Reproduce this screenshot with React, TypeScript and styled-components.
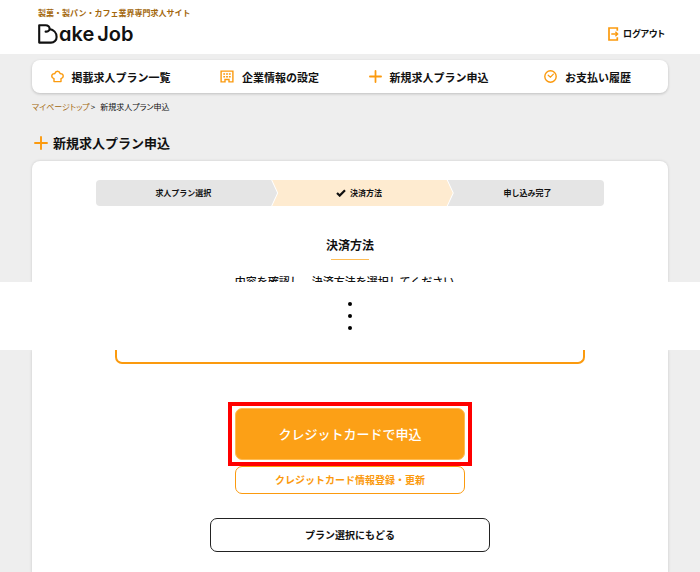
import React from "react";
import styled, { createGlobalStyle, css } from "styled-components";

const colors = {
  ink: "#111111",
  orange: "#fb9a0e",
  brown: "#a3670c",
  page: "#eeeeee",
  line: "#ffbd55",
};

const GlobalStyle = createGlobalStyle`
  *, *::before, *::after { box-sizing: border-box; }
  body {
    margin: 0;
    background: ${colors.page};
    color: ${colors.ink};
    font-family: "Noto Sans CJK JP", "Noto Sans", sans-serif;
    font-size: 11px;
    line-height: 16px;
  }
  a { color: inherit; text-decoration: none; }
  h1, h2, p, ol, ul { margin: 0; padding: 0; }
  ol, ul { list-style: none; }
`;

const Page = styled.div`
  display: flex;
  flex-direction: column;
  min-height: 100vh;
`;

const Header = styled.header`
  display: flex;
  align-items: flex-end;
  justify-content: space-between;
  padding: 7px 35px 9px 38px;
  background: #ffffff;
`;

const Brand = styled.div`
  display: flex;
  flex-direction: column;
  gap: 4px;
`;

const Tagline = styled.p`
  color: ${colors.brown};
  font-size: 8px;
  line-height: 12px;
  font-weight: 700;
`;

const Logo = styled.a`
  display: flex;
  align-items: center;
  gap: 1px;
  height: 22px;
`;

const LogoText = styled.span`
  display: flex;
  gap: 3px;
  font-family: Inter, "Open Sans", sans-serif;
  font-feature-settings: "cv11", "ss03";
  font-size: 20px;
  line-height: 22px;
  font-weight: 600;
`;

const Logout = styled.a`
  display: flex;
  align-items: center;
  gap: 4px;
  padding-bottom: 3px;
  font-size: 9px;
  font-weight: 700;
  font-feature-settings: "palt";
`;

const Nav = styled.nav`
  margin: 6px 32px 0;
  background: #ffffff;
  border-radius: 8px;
  box-shadow: 0 1px 3px rgba(0, 0, 0, 0.2);
`;

const NavList = styled.ul`
  display: grid;
  grid-template-columns: repeat(4, 1fr);
`;

const NavLink = styled.a`
  display: flex;
  align-items: center;
  justify-content: center;
  gap: 8px;
  height: 33px;
  padding-right: 2px;
  font-weight: 700;
  white-space: nowrap;
`;

const Breadcrumb = styled.nav`
  display: flex;
  gap: 5px;
  margin: 6px 32px 0;
  font-size: 8px;
  font-feature-settings: "palt";
`;

const CrumbLink = styled.a`
  color: ${colors.brown};
  margin-right: -4px;
`;

const TitleRow = styled.div`
  display: flex;
  align-items: center;
  gap: 5px;
  margin: 18px 34px 8px;
`;

const Title = styled.h1`
  font-size: 13px;
  line-height: 20px;
  font-weight: 700;
`;

const Panel = styled.section<{ $part: "top" | "bottom" }>`
  display: flex;
  flex-direction: column;
  align-items: center;
  margin: 0 32px;
  background: #ffffff;
  box-shadow: 0 0 3px rgba(0, 0, 0, 0.15);
  ${(p) =>
    p.$part === "top"
      ? css`
          height: 121px;
          overflow: hidden;
          padding-top: 19px;
          border-radius: 8px 8px 0 0;
        `
      : css`
          flex: 1;
          padding-bottom: 21px;
        `}
`;

const Steps = styled.ol`
  display: grid;
  grid-template-columns: 176fr 176fr 158fr;
  flex-shrink: 0;
  width: 80%;
  border-radius: 4px;
  overflow: hidden;
`;

const stepShape = {
  first: "polygon(0 0, calc(100% - 6px) 0, 100% 50%, calc(100% - 6px) 100%, 0 100%)",
  middle: "polygon(1px 0, calc(100% - 6px) 0, 100% 50%, calc(100% - 6px) 100%, 1px 100%, 7px 50%)",
  last: "polygon(1px 0, 100% 0, 100% 100%, 1px 100%, 7px 50%)",
};

const Step = styled.li<{ $shape: keyof typeof stepShape; $current?: boolean }>`
  display: flex;
  align-items: center;
  justify-content: center;
  gap: 4px;
  height: 26px;
  margin-right: ${(p) => (p.$shape === "last" ? "0" : "-6px")};
  padding-right: ${(p) => (p.$shape === "last" ? "0" : "6px")};
  padding-left: ${(p) => (p.$shape === "last" ? "4px" : "0")};
  background: ${(p) => (p.$current ? "#feebd0" : "#e5e5e5")};
  clip-path: ${(p) => stepShape[p.$shape]};
  font-size: 8px;
  font-weight: 700;
`;

const SectionTitle = styled.h2`
  margin-top: 29px;
  font-size: 12px;
  line-height: 20px;
  font-weight: 700;
`;

const TitleRule = styled.div`
  flex-shrink: 0;
  width: 38px;
  height: 1px;
  margin-top: 4px;
  background: ${colors.line};
`;

const Lead = styled.p`
  margin-top: 13px;
  font-weight: 500;
  white-space: nowrap;
`;

const Omitted = styled.div`
  position: relative;
  display: flex;
  flex-direction: column;
  align-items: center;
  justify-content: center;
  gap: 8px;
  height: 68px;
  background: #ffffff;
`;

const Dot = styled.span`
  width: 4px;
  height: 4px;
  border-radius: 50%;
  background: #000000;
`;

const FrameEnd = styled.div`
  width: 74%;
  height: 14px;
  border: 2px solid ${colors.orange};
  border-top: 0;
  border-radius: 0 0 7px 7px;
`;

const Highlight = styled.div`
  margin-top: 38px;
  padding: 2px 3px;
  border: 4px solid #ff0000;
`;

const Button = styled.button<{ $kind: "primary" | "outline" | "back" }>`
  display: block;
  border-radius: 7px;
  font-family: inherit;
  line-height: 20px;
  cursor: pointer;
  ${(p) =>
    p.$kind === "primary" &&
    css`
      width: 230px;
      padding: 15px 0;
      border: 1px solid ${colors.line};
      background: #fca016;
      color: #ffffff;
      font-size: 13px;
      font-weight: 500;
    `}
  ${(p) =>
    p.$kind === "outline" &&
    css`
      width: 230px;
      padding: 3px 0;
      border: 1px solid ${colors.orange};
      background: #ffffff;
      color: ${colors.orange};
      font-size: 10px;
      font-weight: 700;
    `}
  ${(p) =>
    p.$kind === "back" &&
    css`
      width: 280px;
      margin-top: 24px;
      padding: 6px 0;
      border: 1px solid #222222;
      background: #ffffff;
      color: ${colors.ink};
      font-size: 10px;
      font-weight: 700;
    `}
`;

const Icon = styled.svg`
  flex-shrink: 0;
  fill: none;
  stroke: ${colors.orange};
`;

const HatIcon = () => (
  <Icon width="13" height="13" viewBox="0 0 13 13" strokeWidth="1.4" strokeLinejoin="round" aria-hidden="true">
    <path d="M3 11.6V8.6C1.400 8.200.7 7 .8 5.800.9 4.400 2.200 3.500 3.700 3.700 4.200 2.200 5.100 1.200 6.500 1.200s2.300 1 2.800 2.500c1.500-.2 2.800.7 2.900 2.100.1 1.200-.6 2.400-2.200 2.800v3z" />
  </Icon>
);

const BuildingIcon = () => (
  <Icon width="14" height="13" viewBox="0 0 14 13" strokeWidth="1.4" aria-hidden="true">
    <path d="M1.100 1.100h11.800v10.800H9V9.500H5v2.400H1.100z" />
    <path d="M3.300 4h1.800M6.100 4h1.800M8.900 4h1.800M3.300 6.700h1.800M6.100 6.700h1.800M8.900 6.700h1.800" strokeWidth="1.5" />
  </Icon>
);

const PlusIcon = ({ size }: { size: number }) => (
  <Icon width={size} height={size} viewBox="0 0 14 14" strokeWidth="1.9" strokeLinecap="round" aria-hidden="true">
    <path d="M7 1v12M1 7h12" />
  </Icon>
);

const ClockIcon = () => (
  <Icon width="13" height="13" viewBox="0 0 13 13" strokeWidth="1.4" strokeLinecap="round" aria-hidden="true">
    <circle cx="6.5" cy="6.5" r="5.7" />
    <path d="M4.200 5.200l2.200 2 3-3" strokeWidth="1.2" />
  </Icon>
);

const LogoutIcon = () => (
  <Icon width="11" height="14" viewBox="0 0 11 14" strokeWidth="1.3" aria-hidden="true">
    <path d="M9.300 3.700V1H1v12h8.300v-2.700" strokeWidth="1.7" />
    <path d="M3.300 7h6.200M7.400 4.700L9.700 7 7.400 9.300" />
  </Icon>
);

const CheckIcon = () => (
  <Icon width="10" height="8" viewBox="0 0 10 8" aria-hidden="true">
    <path d="M1 4l2.700 2.600L9 1.200" stroke={colors.ink} strokeWidth="2.2" />
  </Icon>
);

const LogoMark = () => (
  <svg width="20" height="20" viewBox="0 0 20 20" fill="none" stroke="#111111" strokeWidth="2.1" strokeLinejoin="round" strokeLinecap="round" aria-hidden="true">
    <path d="M7.600 7.600C9.300 7.900 11.400 7 11.600 5 11.700 2.800 10 1.200 7.600 1.200H1.200v17.400H13a5.600 5.600 0 0 0 5.600-5.700C18.600 8.800 15.600 5.800 11.600 5" />
  </svg>
);

const navItems = [
  { label: "掲載求人プラン一覧", icon: <HatIcon /> },
  { label: "企業情報の設定", icon: <BuildingIcon /> },
  { label: "新規求人プラン申込", icon: <PlusIcon size={13} /> },
  { label: "お支払い履歴", icon: <ClockIcon /> },
];

export default function App() {
  return (
    <Page>
      <GlobalStyle />
      <Header>
        <Brand>
          <Tagline>製菓・製パン・カフェ業界専門求人サイト</Tagline>
          <Logo href="#" aria-label="Bake Job">
            <LogoMark />
            <LogoText>
              <span>ake</span>
              <span>Job</span>
            </LogoText>
          </Logo>
        </Brand>
        <Logout href="#">
          <LogoutIcon />
          ログアウト
        </Logout>
      </Header>
      <Nav aria-label="メニュー">
        <NavList>
          {navItems.map((item) => (
            <li key={item.label}>
              <NavLink href="#">
                {item.icon}
                {item.label}
              </NavLink>
            </li>
          ))}
        </NavList>
      </Nav>
      <Breadcrumb aria-label="パンくず">
        <CrumbLink href="#">マイページトップ</CrumbLink>
        <span>&gt;</span>
        <span>新規求人プラン申込</span>
      </Breadcrumb>
      <TitleRow>
        <PlusIcon size={14} />
        <Title>新規求人プラン申込</Title>
      </TitleRow>
      <Panel $part="top">
        <Steps>
          <Step $shape="first">求人プラン選択</Step>
          <Step $shape="middle" $current aria-current="step">
            <CheckIcon />
            決済方法
          </Step>
          <Step $shape="last">申し込み完了</Step>
        </Steps>
        <SectionTitle>決済方法</SectionTitle>
        <TitleRule />
        <Lead>内容を確認し、決済方法を選択してください。</Lead>
      </Panel>
      <Omitted>
        <Dot />
        <Dot />
        <Dot />
      </Omitted>
      <Panel $part="bottom">
        <FrameEnd />
        <Highlight>
          <Button type="button" $kind="primary">クレジットカードで申込</Button>
        </Highlight>
        <Button type="button" $kind="outline">クレジットカード情報登録・更新</Button>
        <Button type="button" $kind="back">プラン選択にもどる</Button>
      </Panel>
    </Page>
  );
}
